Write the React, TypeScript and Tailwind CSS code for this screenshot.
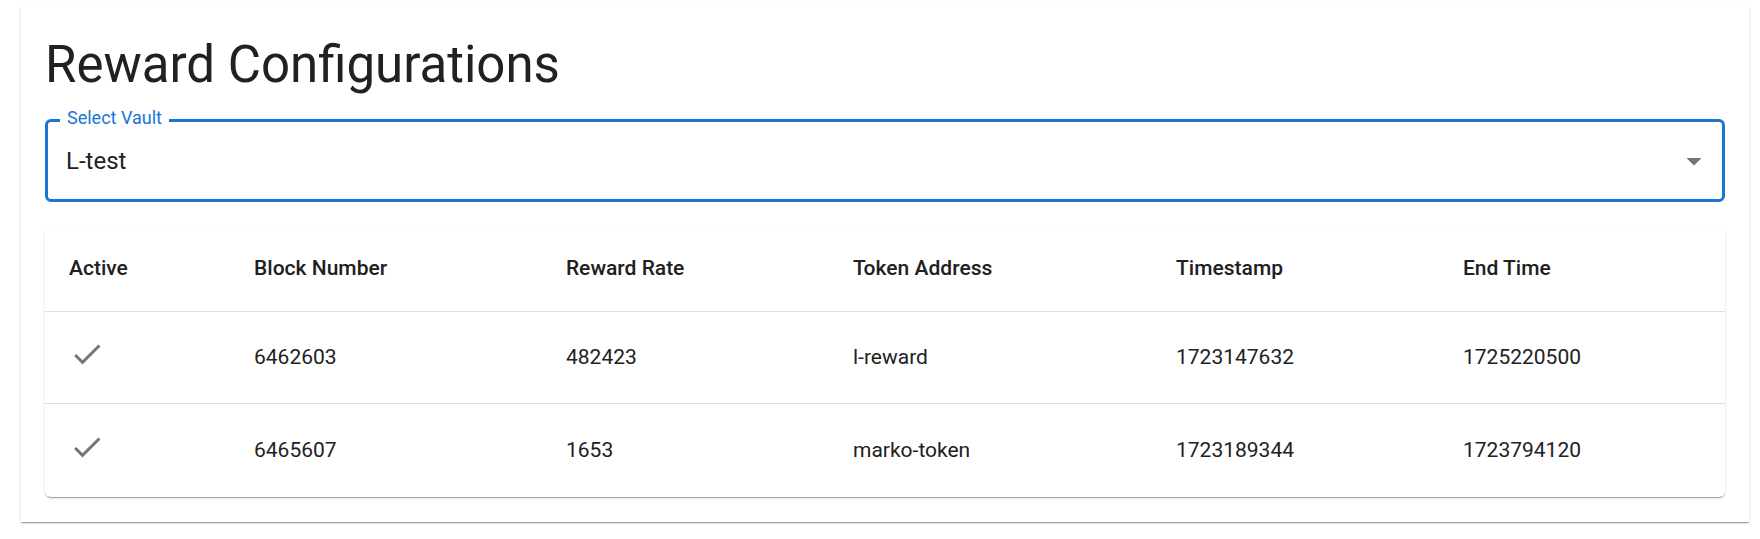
import React from 'react';

type RewardConfig = {
  active: boolean;
  blockNumber: string;
  rewardRate: string;
  tokenAddress: string;
  timestamp: string;
  endTime: string;
};

const configs: RewardConfig[] = [
  { active: true, blockNumber: '6462603', rewardRate: '482423', tokenAddress: 'l-reward', timestamp: '1723147632', endTime: '1725220500' },
  { active: true, blockNumber: '6465607', rewardRate: '1653', tokenAddress: 'marko-token', timestamp: '1723189344', endTime: '1723794120' },
];

const headers = ['Active', 'Block Number', 'Reward Rate', 'Token Address', 'Timestamp', 'End Time'];

const gridCols = 'grid grid-cols-[185px_312px_287px_323px_287px_286px]';

function CheckIcon() {
  return (
    <svg viewBox="0 0 24 24" className="block w-[36px] h-[36px] mb-[7px] fill-[rgba(0,0,0,0.54)]">
      <path d="M9 16.17 4.83 12l-1.42 1.41L9 19 21 7l-1.41-1.41z" />
    </svg>
  );
}

function VaultSelect() {
  return (
    <div className="relative h-[83px] border-[3px] border-[#1976d2] rounded-[6px] flex items-center pl-[18px] pr-[10px]">
      <span className="absolute -top-[13px] left-[12px] px-[7px] bg-white text-[18px] leading-[18px] text-[#1976d2]">
        Select Vault
      </span>
      <span className="flex-1 text-[24px] text-[#212121]">L-test</span>
      <svg viewBox="0 0 24 24" className="w-[36px] h-[36px] fill-[rgba(0,0,0,0.54)]">
        <path d="M7 10l5 5 5-5z" />
      </svg>
    </div>
  );
}

export default function App() {
  return (
    <div className="min-h-screen bg-white pt-[7px] font-['Roboto','Liberation_Sans',sans-serif]">
      <div className="ml-[21px] w-[1728px] bg-white px-[24px] pt-[24px] pb-[25px] shadow-[0px_2px_1px_-1px_rgba(0,0,0,0.2),0px_1px_1px_0px_rgba(0,0,0,0.14),0px_1px_3px_0px_rgba(0,0,0,0.12)]">
        <h1 className="mt-[2px] mb-[23px] text-[51px] leading-[63px] font-normal text-[#212121]">
          Reward Configurations
        </h1>

        <VaultSelect />

        <div className="mt-[25px] bg-white rounded-[6px] overflow-hidden shadow-[0px_2px_1px_-1px_rgba(0,0,0,0.2),0px_1px_1px_0px_rgba(0,0,0,0.14),0px_1px_3px_0px_rgba(0,0,0,0.12)]">
          <div className={`${gridCols} h-[85px] border-b border-[#e0e0e0]`}>
            {headers.map((h) => (
              <div
                key={h}
                className="flex items-center px-[24px] text-[21px] font-medium font-['Roboto_Medium','Roboto',sans-serif] text-[#212121]"
              >
                {h}
              </div>
            ))}
          </div>
          {configs.map((c, i) => (
            <div
              key={c.blockNumber}
              className={`${gridCols} ${i < configs.length - 1 ? 'h-[92px] border-b border-[#e0e0e0]' : 'h-[93px]'}`}
            >
              <div className="flex items-center px-[24px]">{c.active && <CheckIcon />}</div>
              <div className="flex items-center px-[24px] text-[21px] text-[#212121]">{c.blockNumber}</div>
              <div className="flex items-center px-[24px] text-[21px] text-[#212121]">{c.rewardRate}</div>
              <div className="flex items-center px-[24px] text-[21px] text-[#212121]">{c.tokenAddress}</div>
              <div className="flex items-center px-[24px] text-[21px] text-[#212121]">{c.timestamp}</div>
              <div className="flex items-center px-[24px] text-[21px] text-[#212121]">{c.endTime}</div>
            </div>
          ))}
        </div>
      </div>
    </div>
  );
}
